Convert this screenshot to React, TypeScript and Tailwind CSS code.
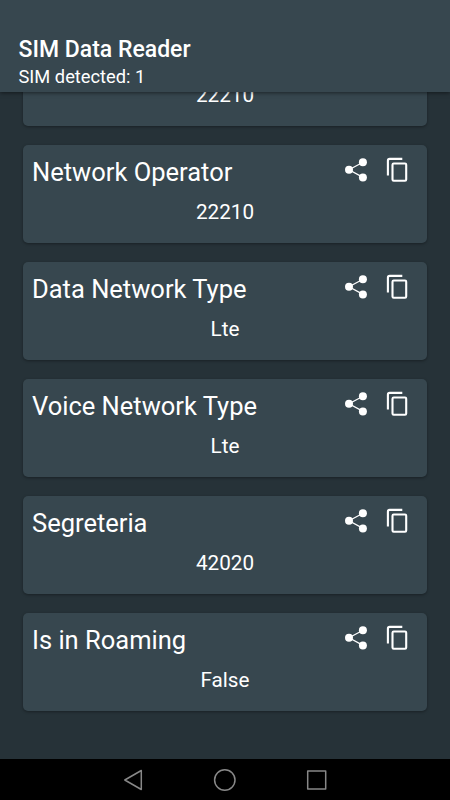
const rows: [string, string][] = [
  ["Network Operator", "22210"],
  ["Data Network Type", "Lte"],
  ["Voice Network Type", "Lte"],
  ["Segreteria", "42020"],
  ["Is in Roaming", "False"],
];

function ShareIcon() {
  return (
    <svg className="h-7 w-7" viewBox="0 0 28 28" fill="#fff">
      <path d="M21 6.3L7 13.8L21 21.4" fill="none" stroke="#fff" strokeWidth="1.2" />
      <circle cx="7" cy="13.8" r="4" />
      <circle cx="20.9" cy="6.3" r="4" />
      <circle cx="20.9" cy="21.4" r="4" />
    </svg>
  );
}

function CopyIcon() {
  return (
    <svg className="h-7 w-7" viewBox="0 0 28 28" fill="none" stroke="#fff" strokeWidth="2.1">
      <path d="M4.9 19.5V4.7Q4.9 2.9 6.7 2.9H19.3" />
      <rect x="9.5" y="7.5" width="13.7" height="17.2" rx="1.2" />
    </svg>
  );
}

function Card({ title, value }: { title?: string; value: string }) {
  return (
    <div className="h-[98px] shrink-0 rounded-[5px] bg-[#37474f] shadow-[0_1px_3px_rgba(0,0,0,0.35)]">
      <div className="flex h-[54px] items-center pl-[9px] pr-4">
        {title && (
          <>
            <span className="flex-1 text-[25.5px] leading-[30px]">{title}</span>
            <div className="mb-1 flex gap-[13px]">
              <ShareIcon />
              <CopyIcon />
            </div>
          </>
        )}
      </div>
      <div className="text-center text-[20.7px] leading-[26px]">{value}</div>
    </div>
  );
}

export default function App() {
  return (
    <div className="flex h-[800px] w-[450px] flex-col overflow-hidden bg-[#263238] font-['Roboto',sans-serif] text-white">
      <header className="z-10 h-[92px] shrink-0 bg-[#37474f] pl-[18.5px] pt-[35px] shadow-[0_1px_4px_rgba(0,0,0,0.5)]">
        <h1 className="text-[23px] font-medium leading-[30px]">SIM Data Reader</h1>
        <p className="text-[18.3px] leading-[24px]">SIM detected: 1</p>
      </header>
      <main className="flex min-h-0 flex-1 flex-col justify-end gap-[19px] overflow-hidden px-[23px] pb-[48px]">
        {/* Scrolled mostly under the header, so its title row stays empty */}
        <Card value="22210" />
        {rows.map(([t, v]) => (
          <Card key={t} title={t} value={v} />
        ))}
      </main>
      <nav className="flex h-[41px] shrink-0 items-center justify-center bg-black">
        <svg width="220" height="24" fill="none" stroke="#888" strokeWidth="1.5" strokeLinejoin="round">
          <path d="M26.3 2.5L9.8 12L26.3 21.5Z" />
          <circle cx="109.8" cy="12" r="10.2" />
          <rect x="192.7" y="3" width="18" height="18" />
        </svg>
      </nav>
    </div>
  );
}
